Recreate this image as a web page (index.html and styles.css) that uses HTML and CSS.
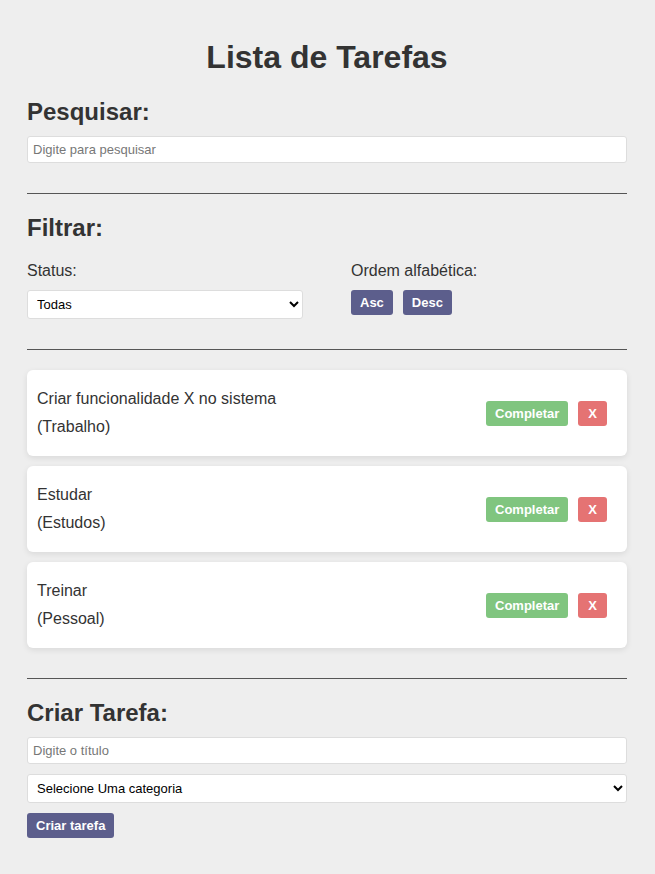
FILE: index.html
```html
<!DOCTYPE html>
<html lang="pt">
<head>
<meta charset="utf-8">
<title>Lista de Tarefas</title>
<link rel="stylesheet" href="styles.css">
</head>
<body>
<main class="app">
  <h1 class="title">Lista de Tarefas</h1>

  <section class="section">
    <h2 class="heading">Pesquisar:</h2>
    <input class="field" type="text" placeholder="Digite para pesquisar">
  </section>

  <hr class="rule">

  <section class="section">
    <h2 class="heading">Filtrar:</h2>
    <div class="filters">
      <div class="filter-col">
        <label class="label">Status:</label>
        <select class="select">
          <option>Todas</option>
          <option>Pendentes</option>
          <option>Completas</option>
        </select>
      </div>
      <div class="filter-col">
        <label class="label">Ordem alfabética:</label>
        <div class="btn-row">
          <button class="btn btn-primary">Asc</button>
          <button class="btn btn-primary">Desc</button>
        </div>
      </div>
    </div>
  </section>

  <hr class="rule">

  <ul class="tasks">
    <li class="task">
      <div class="task-text">
        <span class="task-title">Criar funcionalidade X no sistema</span>
        <span class="task-cat">(Trabalho)</span>
      </div>
      <div class="task-actions">
        <button class="btn btn-success">Completar</button>
        <button class="btn btn-danger">X</button>
      </div>
    </li>
    <li class="task">
      <div class="task-text">
        <span class="task-title">Estudar</span>
        <span class="task-cat">(Estudos)</span>
      </div>
      <div class="task-actions">
        <button class="btn btn-success">Completar</button>
        <button class="btn btn-danger">X</button>
      </div>
    </li>
    <li class="task">
      <div class="task-text">
        <span class="task-title">Treinar</span>
        <span class="task-cat">(Pessoal)</span>
      </div>
      <div class="task-actions">
        <button class="btn btn-success">Completar</button>
        <button class="btn btn-danger">X</button>
      </div>
    </li>
  </ul>

  <hr class="rule">

  <section class="section create">
    <h2 class="heading">Criar Tarefa:</h2>
    <input class="field" type="text" placeholder="Digite o título">
    <select class="select">
      <option>Selecione Uma categoria</option>
      <option>Trabalho</option>
      <option>Estudos</option>
      <option>Pessoal</option>
    </select>
    <div>
      <button class="btn btn-primary">Criar tarefa</button>
    </div>
  </section>
</main>
</body>
</html>
```

FILE: styles.css
```css
* { box-sizing: border-box; }

html, body {
  margin: 0;
  padding: 0;
  background: #eeeeee;
}

body {
  font-family: "Liberation Sans", Arial, sans-serif;
  color: #333333;
}

.app {
  width: 600px;
  margin: 0 0 0 27px;
  padding: 18px 0 30px;
}

.title {
  font-size: 32px;
  line-height: 37px;
  font-weight: bold;
  text-align: center;
  margin: 21px 0 22px;
}

.heading {
  font-size: 24px;
  line-height: 28px;
  font-weight: bold;
  margin: 0 0 10px;
}

.section { margin: 0; }

.rule {
  border: 0;
  border-top: 1px solid #555555;
  margin: 30px 0 20px;
  height: 0;
}

.field {
  display: block;
  width: 100%;
  height: 27px;
  padding: 5px;
  font-family: "Liberation Sans", Arial, sans-serif;
  font-size: 13px;
  color: #333;
  background: #fff;
  border: 1px solid #dddddd;
  border-radius: 3px;
  outline: none;
}

.field::placeholder { color: #777777; }

.select {
  display: block;
  width: 100%;
  height: 29px;
  padding: 0 5px;
  font-family: "Liberation Sans", Arial, sans-serif;
  font-size: 13px;
  color: #000;
  background: #fff;
  border: 1px solid #dddddd;
  border-radius: 3px;
}

.filters {
  display: grid;
  grid-template-columns: 1fr 1fr;
  column-gap: 48px;
  margin-top: 19px;
}

.filter-col {
  display: flex;
  flex-direction: column;
  gap: 10px;
}

.label {
  font-size: 16px;
  line-height: 19px;
  display: block;
}

.btn-row {
  display: flex;
  gap: 10px;
}

.btn {
  font-family: "Liberation Sans", Arial, sans-serif;
  font-size: 13px;
  font-weight: bold;
  line-height: 15px;
  color: #ffffff;
  border: 0;
  border-radius: 3px;
  padding: 5px 9px;
  cursor: pointer;
}

.btn-primary { background: #5c5e8c; }
.btn-success { background: #80c57f; }
.btn-danger { background: #e57373; padding: 5px 10px; }

.tasks {
  list-style: none;
  margin: 0;
  padding: 0;
  display: flex;
  flex-direction: column;
  gap: 10px;
}

.task {
  display: flex;
  align-items: center;
  justify-content: space-between;
  background: #ffffff;
  border-radius: 6px;
  box-shadow: 0 2px 6px rgba(0, 0, 0, 0.09);
  padding: 15px 20px 15px 10px;
}

.task-text {
  display: flex;
  flex-direction: column;
  font-size: 16px;
  line-height: 28px;
}

.task-actions {
  display: flex;
  gap: 10px;
}

.create .field { margin-bottom: 10px; }
.create .select { margin-bottom: 10px; }
```
